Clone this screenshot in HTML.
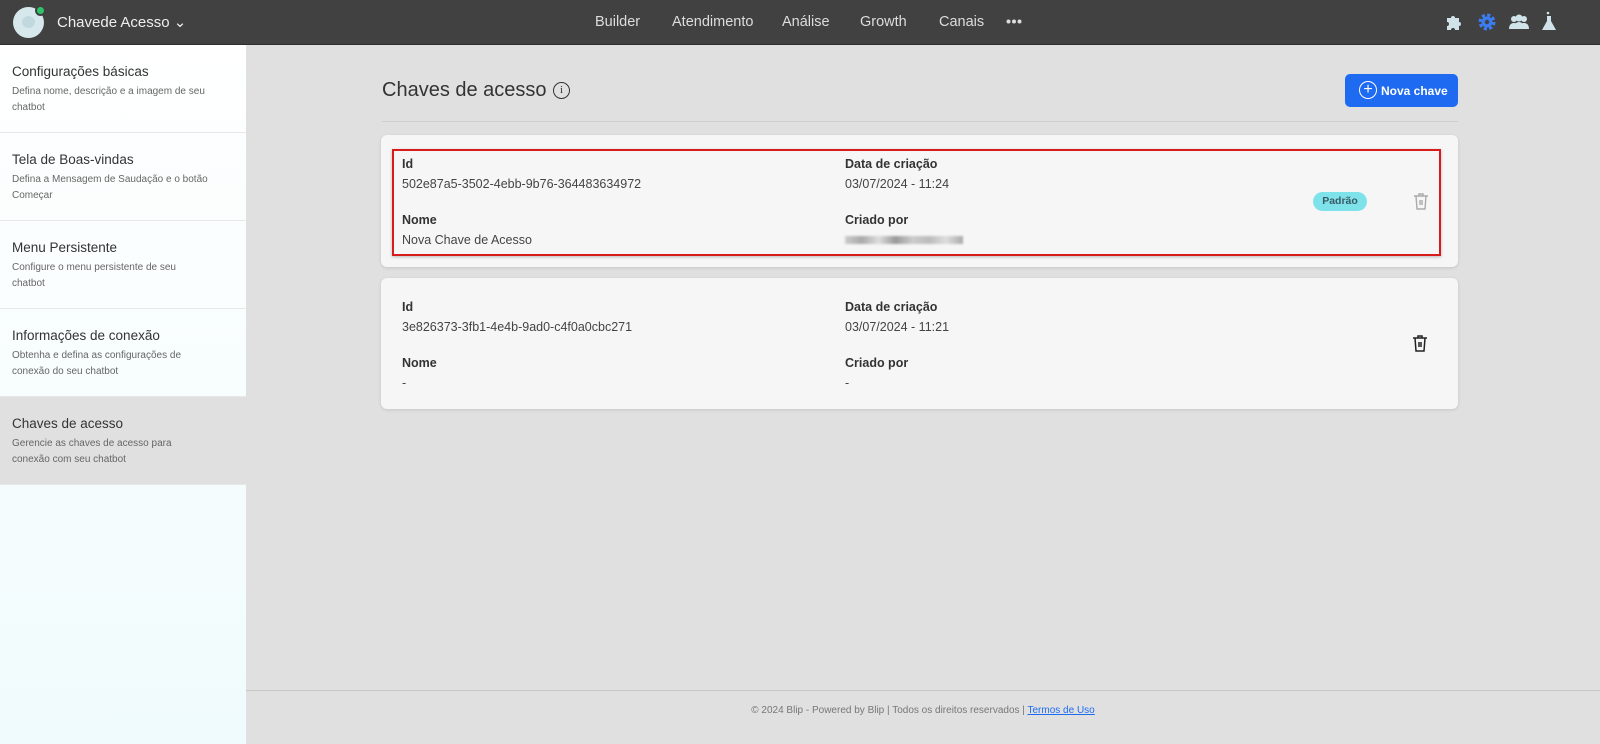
<!DOCTYPE html>
<html><head><meta charset="utf-8"><style>
*{margin:0;padding:0;box-sizing:border-box}
body{width:1600px;height:744px;overflow:hidden;background:#e0e0e0;font-family:"Liberation Sans",sans-serif;position:relative}
.top{position:absolute;left:0;top:0;width:1600px;height:45px;background:#414141;border-bottom:1px solid #2e2e2e}
.logo{position:absolute;left:13px;top:7px;width:31px;height:31px;border-radius:50%;background:#d7e8ec}
.logo:before{content:"";position:absolute;left:9px;top:9px;width:13px;height:12px;border-radius:50%;background:#c0d8de}
.dot{position:absolute;left:35px;top:5px;width:11px;height:11px;border-radius:50%;background:#2cc36b;border:2px solid #414141}
.brand{position:absolute;left:57px;top:13px;color:#eee;font-size:15px}
.nav{position:absolute;top:14px;color:#ddd;font-size:14.5px}
.side{position:absolute;left:0;top:45px;width:246px;height:699px;background:linear-gradient(#fff,#f0fbfd)}
.item{height:88px;border-bottom:1px solid #e8e8e8;padding:19px 12px}
.item h4{font-weight:normal;font-size:13.5px;color:#333;margin-bottom:5px}
.item p{font-size:10px;color:#666;line-height:16px;width:195px}
.item.act{background:#e0e0e0}
h1{position:absolute;left:382px;top:79px;font-weight:normal;font-size:20px;color:#333}
.info{position:absolute;left:553px;top:82px;width:17px;height:17px;border:1.5px solid #333;border-radius:50%;font-size:11px;text-align:center;line-height:14px;color:#333;font-family:"Liberation Serif",serif}
.btn{position:absolute;left:1345px;top:74px;width:113px;height:33px;background:#1e6bf1;border-radius:5px;color:#fff;font-weight:bold;font-size:12px;padding:10px 0 0 36px;white-space:nowrap}
.btn i{position:absolute;left:14px;top:7px;width:18px;height:18px;border:1.5px solid #fff;border-radius:50%;font-style:normal;font-weight:normal;text-align:center;line-height:15px;font-size:16px}
.hr{position:absolute;left:382px;top:121px;width:1076px;height:1px;background:#cfcfcf}
.card{position:absolute;left:381px;width:1077px;background:#f6f6f6;border-radius:6px;box-shadow:0 1px 3px rgba(0,0,0,.12)}
.f{position:absolute;font-size:12.5px;color:#444}
.f b{display:block;color:#333;margin-bottom:6px}
.pill{position:absolute;left:932px;top:57px;width:54px;height:19px;border-radius:10px;background:#7ee2ea;font-size:10.5px;font-weight:bold;text-align:center;line-height:19px;color:#3a5a66}
.blur{display:inline-block;width:118px;height:8px;background:linear-gradient(90deg,#ccc,#aaa,#ddd,#999,#ccc,#bbb,#ddd,#aaa);filter:blur(1px)}
.foot{position:absolute;left:246px;top:690px;width:1354px;height:54px;border-top:1px solid #c8c8c8;text-align:center;font-size:10px;color:#777;padding-top:14px}
.foot a{color:#1e6bf1;text-decoration:underline}
</style></head><body>
<div class="top">
<div class="logo"></div><div class="dot"></div>
<div class="brand">Chavede Acesso ⌄</div>
<div class="nav" style="left:595px">Builder</div>
<div class="nav" style="left:672px">Atendimento</div>
<div class="nav" style="left:782px">Análise</div>
<div class="nav" style="left:860px">Growth</div>
<div class="nav" style="left:939px">Canais</div>
<svg style="position:absolute;left:1006px;top:19px" width="16" height="5" viewBox="0 0 16 5"><circle cx="2.5" cy="2.5" r="2" fill="#ddd"/><circle cx="8" cy="2.5" r="2" fill="#ddd"/><circle cx="13.5" cy="2.5" r="2" fill="#ddd"/></svg>
<svg style="position:absolute;left:1444px;top:12px" width="20" height="20" viewBox="0 0 20 20"><path fill="#cfe3e8" d="M3 6h4a2 2 0 1 1 4 0h4v4a2 2 0 1 1 0 4v4h-4a2 2 0 1 0-4 0H3v-4a2 2 0 1 0 0-4z"/></svg>
<svg style="position:absolute;left:1477px;top:12px" width="20" height="20" viewBox="0 0 20 20"><circle cx="10" cy="10" r="6.5" fill="none" stroke="#3b7cf0" stroke-width="4" stroke-dasharray="3 2.1"/><circle cx="10" cy="10" r="5.5" fill="#3b7cf0"/><circle cx="10" cy="10" r="2.2" fill="#414141"/></svg>
<svg style="position:absolute;left:1508px;top:12px" width="22" height="20" viewBox="0 0 22 20"><circle cx="6" cy="7" r="3" fill="#cfe3e8"/><circle cx="16" cy="7" r="3" fill="#cfe3e8"/><circle cx="11" cy="6" r="3.5" fill="#cfe3e8"/><path fill="#cfe3e8" d="M1 17c0-5 3-6 5-6s5 1 5 6zM11 17c0-5 3-6 5-6s5 1 5 6zM5 17c0-5 4-7 6-7s6 2 6 7z"/></svg>
<svg style="position:absolute;left:1541px;top:10px" width="16" height="22" viewBox="0 0 16 22"><path fill="#cfe3e8" d="M6 6h4v5l5 9H1l5-9z"/><circle cx="7" cy="3" r="1.3" fill="#cfe3e8"/></svg>
</div>
<div class="side">
<div class="item"><h4>Configurações básicas</h4><p>Defina nome, descrição e a imagem de seu chatbot</p></div>
<div class="item"><h4>Tela de Boas-vindas</h4><p style="width:205px">Defina a Mensagem de Saudação e o botão Começar</p></div>
<div class="item"><h4>Menu Persistente</h4><p style="width:175px">Configure o menu persistente de seu chatbot</p></div>
<div class="item"><h4>Informações de conexão</h4><p style="width:175px">Obtenha e defina as configurações de conexão do seu chatbot</p></div>
<div class="item act"><h4>Chaves de acesso</h4><p style="width:200px">Gerencie as chaves de acesso para conexão com seu chatbot</p></div>
</div>
<h1>Chaves de acesso</h1><div class="info">i</div>
<div class="btn"><i>+</i>Nova chave</div>
<div class="hr"></div>
<div class="card" style="top:135px;height:132px">
<div style="position:absolute;left:11px;top:14px;width:1049px;height:107px;border:2px solid #d81c1c;box-shadow:0 1px 3px rgba(0,0,0,.25)"></div>
<div class="f" style="left:21px;top:22px"><b>Id</b>502e87a5-3502-4ebb-9b76-364483634972</div>
<div class="f" style="left:464px;top:22px"><b>Data de criação</b>03/07/2024 - 11:24</div>
<div class="f" style="left:21px;top:78px"><b>Nome</b>Nova Chave de Acesso</div>
<div class="f" style="left:464px;top:78px"><b>Criado por</b><span class="blur"></span></div>
<div class="pill">Padrão</div>
<svg style="position:absolute;left:1032px;top:57px" width="16" height="18" viewBox="0 0 16 18"><path fill="none" stroke="#aaa" stroke-width="1.4" d="M1 4h14M6 4V2h4v2M3 4l1 13h8l1-13M7 8v5M9 8v5"/></svg>
</div>
<div class="card" style="top:278px;height:131px">
<div class="f" style="left:21px;top:22px"><b>Id</b>3e826373-3fb1-4e4b-9ad0-c4f0a0cbc271</div>
<div class="f" style="left:464px;top:22px"><b>Data de criação</b>03/07/2024 - 11:21</div>
<div class="f" style="left:21px;top:78px"><b>Nome</b>-</div>
<div class="f" style="left:464px;top:78px"><b>Criado por</b>-</div>
<svg style="position:absolute;left:1031px;top:56px" width="16" height="18" viewBox="0 0 16 18"><path fill="none" stroke="#222" stroke-width="1.5" d="M1 4h14M6 4V2h4v2M3 4l1 13h8l1-13M7 8v5M9 8v5"/></svg>
</div>
<div class="foot">© 2024 Blip - Powered by Blip | Todos os direitos reservados | <a>Termos de Uso</a></div>
</body></html>
